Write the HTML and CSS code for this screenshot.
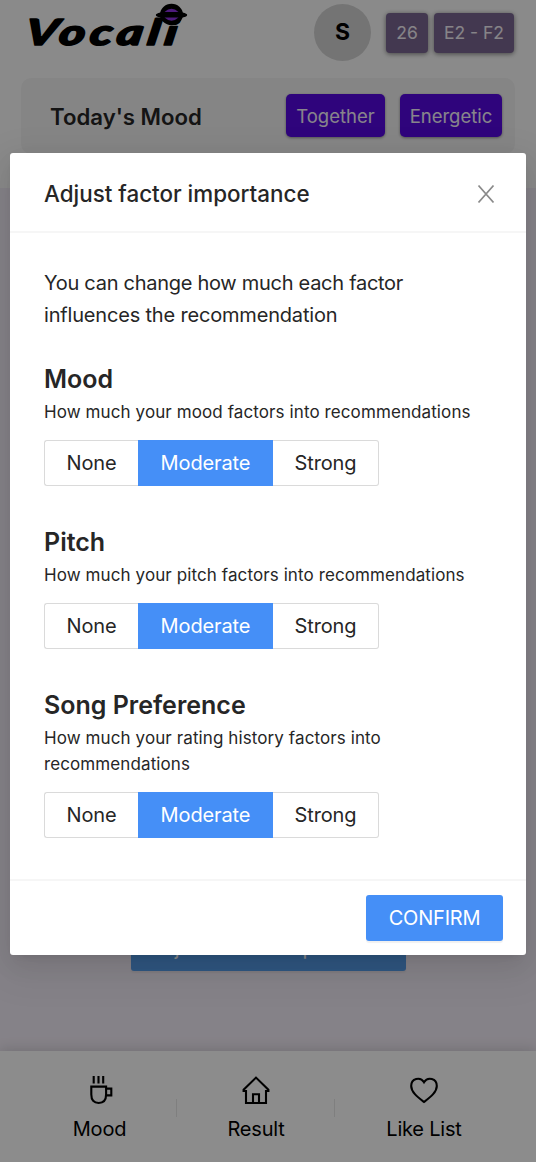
FILE: index.html
```html
<!DOCTYPE html>
<html lang="en">
<head>
<meta charset="utf-8">
<title>Vocali</title>
<link rel="stylesheet" href="styles.css">
</head>
<body>
<div class="app">
  <header class="header">
    <div class="topbar">
      <svg class="logo" width="172" height="64" viewBox="0 0 172 64">
        <g transform="translate(4 0) skewX(-9) scale(1.38 1)"><text class="wordmark" x="3" y="45" textLength="110">Vocali</text></g>
        <ellipse cx="148.500" cy="14.500" rx="11.500" ry="10.700"/>
        <ellipse cx="148.500" cy="15" rx="15.700" ry="3.600"/>
        <path class="stripe" d="M141.500 12q7-6.500 14 0zM141.500 17.600h14q-7 6.500-14 0z"/>
      </svg>
      <div class="profile">
        <span class="avatar">S</span>
        <span class="range range-age">26</span>
        <span class="range range-pitch">E2 - F2</span>
      </div>
    </div>
    <section class="today">
      <h2 class="today-title">Today's Mood</h2>
      <span class="tag tag-together">Together</span>
      <span class="tag tag-energetic">Energetic</span>
    </section>
  </header>
  <main class="content">
    <button class="adjust">Adjust Factor Importance</button>
  </main>
  <nav class="nav">
    <a class="nav-item nav-mood">
      <svg class="nav-icon" width="34" height="34" viewBox="0 0 34 34"><path d="M10.700 3v7.500M15.500 3v7.500M20.200 3v7.500M8.300 13.600h14.800v8q0 8.400-7.400 8.400t-7.400-8.400zM23.100 15.600h5.200v6.800h-5.200"/></svg>
      <span>Mood</span>
    </a>
    <a class="nav-item nav-result">
      <svg class="nav-icon" width="34" height="34" viewBox="0 0 34 34"><path d="M7 30V18H4.600v-1.200L17 4.600l12.400 12.200V18H27v12zM14 30v-8.800h6V30"/></svg>
      <span>Result</span>
    </a>
    <a class="nav-item nav-likes">
      <svg class="nav-icon" width="34" height="34" viewBox="0 0 34 34"><path d="M17 29C10 23.500 4.200 19 4.200 13 4.200 5.500 13.200 3.200 17 9.200 20.800 3.200 29.800 5.500 29.800 13 29.800 19 24 23.500 17 29z"/></svg>
      <span>Like List</span>
    </a>
  </nav>
</div>
<div class="mask">
  <div class="modal">
    <div class="modal-header">
      <h1 class="modal-title">Adjust factor importance</h1>
      <svg class="close" width="18" height="20" viewBox="0 0 18 20"><path d="M1.500 1.500l15 17M16.500 1.500l-15 17"/></svg>
    </div>
    <div class="modal-body">
      <p class="intro">You can change how much each factor<br><span class="intro-end">influences the recommendation</span></p>
      <section class="factor">
        <h3 class="factor-title">Mood</h3>
        <p class="factor-text">How much your mood factors into recommendations</p>
        <div class="radio"><span class="opt none">None</span><span class="opt moderate">Moderate</span><span class="opt strong">Strong</span></div>
      </section>
      <section class="factor">
        <h3 class="factor-title">Pitch</h3>
        <p class="factor-text">How much your pitch factors into recommendations</p>
        <div class="radio"><span class="opt none">None</span><span class="opt moderate">Moderate</span><span class="opt strong">Strong</span></div>
      </section>
      <section class="factor">
        <h3 class="factor-title">Song Preference</h3>
        <p class="factor-text">How much your rating history factors into<br>recommendations</p>
        <div class="radio"><span class="opt none">None</span><span class="opt moderate">Moderate</span><span class="opt strong">Strong</span></div>
      </section>
    </div>
    <div class="modal-footer"><button class="confirm">CONFIRM</button></div>
  </div>
</div>
</body>
</html>
```
FILE: styles.css
```css
* { box-sizing: border-box; }
body { margin: 0; font-family: Inter, "Liberation Sans", sans-serif; color: #262626; }
h1, h2, h3, p { margin: 0; }
button { border: 0; font-family: inherit; }
.app { height: 1162px; display: flex; flex-direction: column; background: #f3edf7; overflow: hidden; }
.header { height: 188px; background: #fcfcfc; padding: 0 21px; }
.topbar { height: 78px; display: flex; justify-content: space-between; align-items: flex-start; padding: 0 1px 0 2px; }
.wordmark { font: italic 900 36px Lato, sans-serif; stroke: #000; stroke-width: 1.500px; stroke-linejoin: round; }
.stripe { fill: #8c32e0; }
.profile { display: flex; align-items: center; padding-top: 4px; }
.avatar { width: 57px; height: 57px; border-radius: 50%; background: #d4d4d4; color: #000; font-size: 23px; font-weight: 700; line-height: 57px; text-align: center; margin-right: 15px; }
.range { height: 40px; line-height: 39px; border-radius: 4px; background: #7b6792; color: #f5f1f8; font-size: 17.500px; text-align: center; box-shadow: 0 1px 5px rgba(0,0,0,.5); }
.range-age { width: 42px; margin-right: 6px; }
.range-pitch { width: 80px; }
.today { height: 76px; border-radius: 10px; background: #f3f3f3; display: flex; align-items: center; padding: 0 13px 1px 29px; }
.today-title { flex: 1; font-size: 22.200px; font-weight: 600; padding-top: 1px; }
.tag { height: 43px; line-height: 45px; border-radius: 5px; background: #5609e2; color: #f7f2fd; font-size: 18.500px; text-align: center; box-shadow: 0 1px 3px rgba(0,0,0,.4); }
.tag-together { width: 99px; margin-right: 15px; }
.tag-energetic { width: 102px; }
.content { flex: 1; display: flex; justify-content: center; align-items: flex-end; padding: 0 0 80px; }
.adjust { width: 275px; height: 46px; background: #579de9; color: #fff; font-size: 20px; border-radius: 3px; box-shadow: 0 2px 2px rgba(0,0,0,.06); }
.nav { height: 111px; background: #fff; display: flex; padding: 0 22px; box-shadow: 0 -2px 12px rgba(0,0,0,.14); color: #000; font-size: 20px; letter-spacing: -.200px; }
.nav-item { display: flex; flex-direction: column; align-items: center; padding-top: 22px; background: linear-gradient(#e8e8e8, #e8e8e8) right 48px / 1px 18px no-repeat; }
.nav-item span { line-height: 32px; margin-top: 6px; }
.nav-mood { width: 155px; }
.nav-result { width: 158px; }
.nav-likes { width: 178px; background: none; }
.nav-icon { fill: none; stroke: #000; stroke-width: 2.100px; }
.mask { position: absolute; inset: 0; height: 1162px; background: rgba(0,0,0,.45); padding: 153px 10px 0; }
.modal { height: 802px; background: #fff; border-radius: 3px; display: flex; flex-direction: column; box-shadow: 0 4px 9px -6px rgba(0,0,0,.12), 0 9px 23px rgba(0,0,0,.08), 0 13px 40px 11px rgba(0,0,0,.05); }
.modal-header { height: 80px; border-bottom: 2px solid #f6f6f6; display: flex; align-items: center; justify-content: space-between; padding: 2px 31px 0 34px; }
.modal-title { font-size: 22.400px; font-weight: 500; }
.close { stroke: #8a8a8a; stroke-width: 1.800px; fill: none; margin-top: 1px; }
.modal-body { flex: 1; padding: 34px 34px 0; }
.intro { font-size: 20px; line-height: 32px; margin-bottom: 29px; white-space: nowrap; letter-spacing: -.280px; }
.intro-end { letter-spacing: -.180px; }
.factor { margin-bottom: 37px; }
.factor-title { font-size: 25px; font-weight: 600; line-height: 39px; }
.factor-text { font-size: 17px; line-height: 26px; white-space: nowrap; letter-spacing: .100px; }
.radio { display: flex; margin-top: 15px; width: 335px; }
.opt { height: 46px; line-height: 45px; border: 1.500px solid #dadada; font-size: 20px; letter-spacing: -.120px; text-align: center; }
.none { width: 94px; border-right: 0; border-radius: 3px 0 0 3px; }
.moderate { width: 135px; background: #458ff7; border-color: #458ff7; color: #fff; }
.strong { width: 106px; border-left: 0; border-radius: 0 3px 3px 0; }
.modal-footer { height: 76px; border-top: 2px solid #f6f6f6; display: flex; justify-content: flex-end; padding: 14px 23px 0; }
.confirm { width: 137px; height: 46px; background: #458ff7; color: #fff; border-radius: 3px; font-size: 20px; letter-spacing: -.200px; box-shadow: 0 2px 1px rgba(0,0,0,.06); }
```
